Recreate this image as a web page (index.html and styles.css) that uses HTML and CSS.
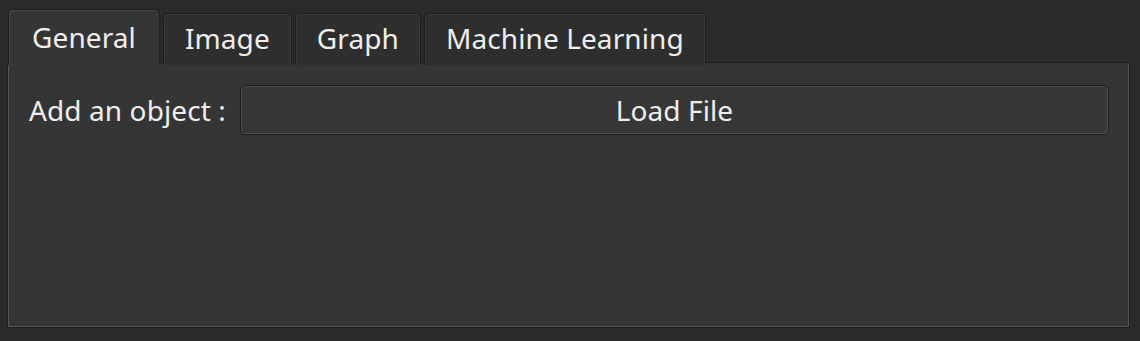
FILE: index.html
```html
<!DOCTYPE html>
<html lang="en">
<head>
    <meta charset="UTF-8">
    <title>Settings</title>
    <link rel="stylesheet" href="styles.css">
</head>
<body>
    <div class="window">
        <!-- Pestañas -->
        <div class="tab-bar">
            <div class="tab active">General</div>
            <div class="tab">Image</div>
            <div class="tab">Graph</div>
            <div class="tab">Machine Learning</div>
        </div>

        <!-- Panel -->
        <div class="pane">
            <div class="row">
                <span class="label">Add an object :</span>
                <button class="btn">Load File</button>
            </div>
        </div>
    </div>
</body>
</html>
```

FILE: styles.css
```css
* {
    margin: 0;
    padding: 0;
    box-sizing: border-box;
}

body {
    background-color: #2a2a2a;
    color: #eeeeee;
    font-family: "Noto Sans", "DejaVu Sans", sans-serif;
    font-size: 28px;
    letter-spacing: 0.1px;
    overflow: hidden;
}

.window {
    padding: 9px 10px 13px 7px;
}

/* Pestañas */
.tab-bar {
    display: flex;
    align-items: flex-end;
    gap: 3px;
    padding-left: 1px;
    margin-bottom: -3px;
    position: relative;
    z-index: 1;
}

.tab {
    height: 52px;
    padding: 0 21px;
    line-height: 48px;
    background-color: #2e2e2e;
    border: 1px solid #1d1d1d;
    border-bottom: none;
    border-radius: 4px 4px 0 0;
    box-shadow: inset 1px 1px 0 #3a3a3a, inset -1px 0 0 #3a3a3a;
    white-space: nowrap;
}

.tab.active {
    height: 56px;
    padding: 0 23px;
    line-height: 54px;
    background-color: #353535;
    border-color: #1f1f1f;
    box-shadow: inset 1px 1px 0 #444444;
}

/* Panel */
.pane {
    height: 266px;
    background-color: #353535;
    border: 1px solid #1d1d1d;
    box-shadow: inset 1px 0 0 #555555, inset 0 -1px 0 #555555, inset -1px 0 0 #555555;
    padding: 22px 20px 0 20px;
}

.row {
    display: flex;
    align-items: center;
    gap: 14px;
}

.label {
    padding-left: 1px;
    white-space: nowrap;
}

.btn {
    flex: 1;
    height: 50px;
    background-color: #373737;
    color: #eeeeee;
    font-family: inherit;
    font-size: inherit;
    letter-spacing: inherit;
    border: 1px solid #1c1c1c;
    border-radius: 5px;
    box-shadow: inset 1px 1px 0 #4a4a4a, inset -1px -1px 0 #505050;
}
```
